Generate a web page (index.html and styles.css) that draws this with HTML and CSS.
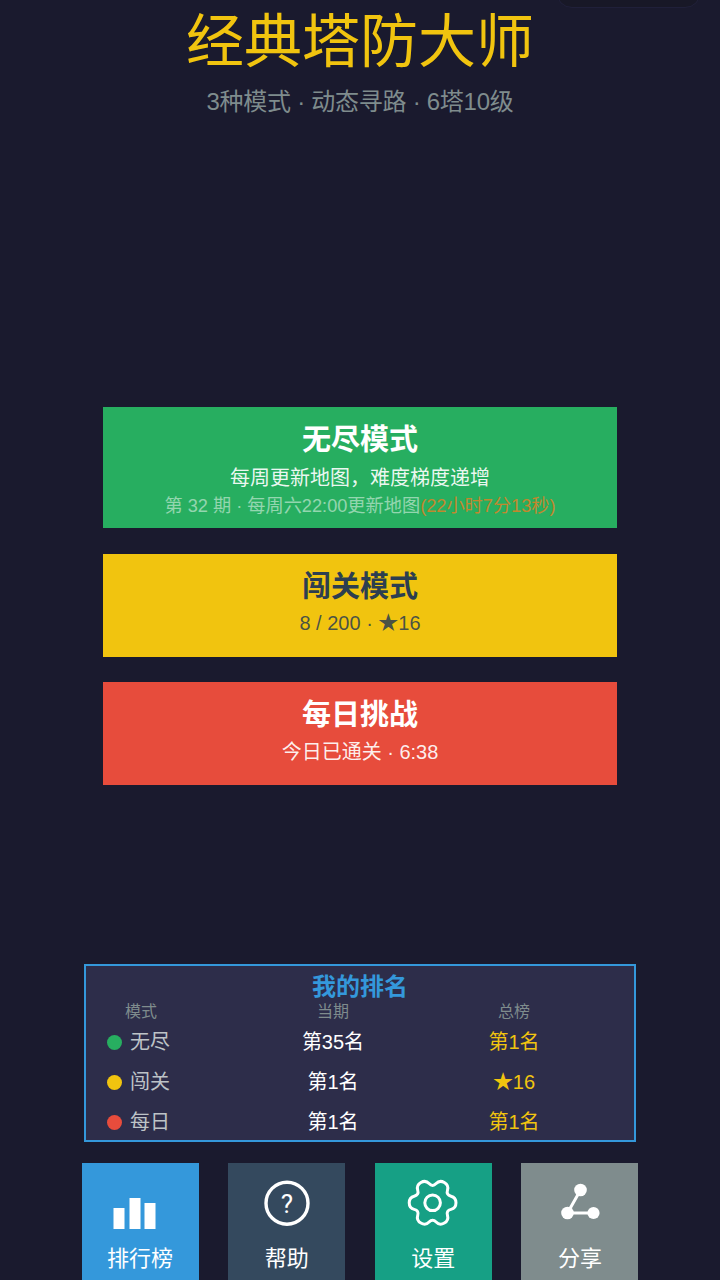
FILE: index.html
```html
<!DOCTYPE html>
<html lang="zh">
<head>
<meta charset="utf-8">
<title>经典塔防大师</title>
<link rel="stylesheet" href="styles.css">
</head>
<body>
<div class="capsule"></div>
<main class="page">
  <header class="head">
    <h1 class="title">经典塔防大师</h1>
    <p class="subtitle">3种模式 · 动态寻路 · 6塔10级</p>
  </header>
  <section class="modes">
    <div class="mode green">
      <div class="mode-name">无尽模式</div>
      <div class="mode-desc">每周更新地图，难度梯度递增</div>
      <div class="mode-extra">第 32 期 · 每周六22:00更新地图<span class="timer">(22小时7分13秒)</span></div>
    </div>
    <div class="mode yellow">
      <div class="mode-name">闯关模式</div>
      <div class="mode-desc">8 / 200 · ★16</div>
    </div>
    <div class="mode red">
      <div class="mode-name">每日挑战</div>
      <div class="mode-desc">今日已通关 · 6:38</div>
    </div>
  </section>
  <section class="rank">
    <div class="rank-title">我的排名</div>
    <div class="rank-grid">
      <div class="th first">模式</div><div class="th">当期</div><div class="th">总榜</div>
      <div class="td first"><i class="dot d-green"></i>无尽</div><div class="td">第35名</div><div class="td gold">第1名</div>
      <div class="td first"><i class="dot d-yellow"></i>闯关</div><div class="td">第1名</div><div class="td gold">★16</div>
      <div class="td first"><i class="dot d-red"></i>每日</div><div class="td">第1名</div><div class="td gold">第1名</div>
    </div>
  </section>
  <nav class="tabs">
    <div class="tab blue">
      <svg class="icon" viewBox="0 0 50 50"><path fill="#fff" d="M-1.500 29h11v21h-11zM14.500 19h11v31h-11zM29.500 24h11v26h-11z"/></svg>
      <span>排行榜</span>
    </div>
    <div class="tab navy">
      <svg class="icon" viewBox="0 0 50 50"><circle cx="25" cy="24.200" r="21" fill="none" stroke="#fff" stroke-width="3.400"/><text x="25" y="33.500" class="q">?</text></svg>
      <span>帮助</span>
    </div>
    <div class="tab teal">
      <svg class="icon" viewBox="0 0 50 50"><g transform="translate(24.600 23.800)" fill="none" stroke="#fff" stroke-width="3"><path stroke-linejoin="round" d="M23.380 0Q23.380 5.400 18.400 6.575Q13.420 7.750 14.895 12.650Q16.370 17.550 11.695 20.250Q7.020 22.950 3.510 19.225Q0 15.500 -3.510 19.225Q-7.020 22.950 -11.695 20.250Q-16.370 17.550 -14.895 12.650Q-13.420 7.750 -18.400 6.575Q-23.380 5.400 -23.380 0Q-23.380 -5.400 -18.400 -6.575Q-13.420 -7.750 -14.895 -12.650Q-16.370 -17.550 -11.695 -20.250Q-7.020 -22.950 -3.510 -19.225Q0 -15.500 3.510 -19.225Q7.020 -22.950 11.695 -20.250Q16.370 -17.550 14.895 -12.650Q13.420 -7.750 18.400 -6.575Q23.380 -5.400 23.380 0Z"/><circle r="7.800"/></g></svg>
      <span>设置</span>
    </div>
    <div class="tab gray">
      <svg class="icon" viewBox="0 0 50 50"><path fill="none" stroke="#fff" stroke-width="3" d="M25.500 11 12.500 34h26"/><circle cx="25.500" cy="11" r="6.300" fill="#fff"/><circle cx="12.500" cy="34" r="6.300" fill="#fff"/><circle cx="38.500" cy="34" r="6.100" fill="#fff"/></svg>
      <span>分享</span>
    </div>
  </nav>
</main>
</body>
</html>
```

FILE: styles.css
```css
* { box-sizing: border-box; }
html, body { margin: 0; padding: 0; height: 1280px; overflow: hidden; background: #1a1a2e; }
body { font-family: "Liberation Sans", "Noto Sans CJK SC", sans-serif; color: #fff; }
.capsule { position: absolute; top: -24px; left: 556px; width: 145px; height: 32px; border-radius: 16px; background: #181827; border: 1px solid #20203a; }
.page { height: 1280px; display: flex; flex-direction: column; align-items: center; }
.head { height: 407px; text-align: center; }
.title { margin: 0; padding-top: 9px; font-size: 58px; line-height: 66px; font-weight: 400; color: #f1c40f; }
.subtitle { margin: 0; padding-top: 10px; font-size: 24px; line-height: 34px; letter-spacing: -.27px; color: #7f8c8d; }
.modes { width: 514px; display: flex; flex-direction: column; }
.mode { text-align: center; padding-top: 14px; }
.mode-name { font-size: 29px; line-height: 38px; font-weight: 700; }
.mode-desc { font-size: 20px; line-height: 28px; margin-top: 4px; color: rgba(255,255,255,.92); }
.mode-extra { font-size: 18.200px; line-height: 26px; margin-top: 1px; color: rgba(255,255,255,.5); }
.green { height: 121px; background: #27ae60; }
.green .mode-desc { margin-top: 5px; }
.yellow { height: 103px; margin-top: 26px; background: #f1c40f; color: #2c3e50; }
.yellow .mode-desc { margin-top: 3px; color: rgba(44,62,80,.85); }
.red { height: 103px; margin-top: 25px; background: #e74c3c; }
.timer { color: rgba(230,126,34,.82); }
.rank { margin-top: 179px; width: 552px; height: 178px; background: #2d2d4a; border: 2px solid #3498db; padding-top: 6px; }
.rank-title { text-align: center; color: #3498db; font-size: 24px; line-height: 30px; font-weight: 700; }
.rank-grid { display: grid; grid-template-columns: 109px 234px 128px; margin-left: 21px; grid-template-rows: 20px repeat(3, 40px); justify-content: start; }
.th { font-size: 16px; line-height: 20px; color: #7f8c8d; text-align: center; }
.th.first { width: 68px; }
.td { font-size: 20px; line-height: 40px; text-align: center; color: #fff; }
.td.first { text-align: left; color: #bdc3c7; display: flex; align-items: center; gap: 8px; }
.gold { color: #f1c40f; }
.dot { width: 15px; height: 15px; border-radius: 50%; }
.d-green { background: #27ae60; }
.d-yellow { background: #f1c40f; }
.d-red { background: #e74c3c; }
.tabs { margin-top: 21px; width: 557px; display: flex; justify-content: space-between; }
.tab { width: 117px; height: 117px; display: flex; flex-direction: column; align-items: center; padding-top: 16px; font-size: 22px; line-height: 30px; }
.icon { width: 50px; height: 50px; display: block; margin-bottom: 15px; overflow: visible; }
.q { font-family: Roboto, sans-serif; font-weight: 400; font-size: 26px; fill: #fff; text-anchor: middle; }
.blue { background: #3498db; }
.navy { background: #34495e; }
.teal { background: #16a085; }
.gray { background: #7f8c8d; }
```
